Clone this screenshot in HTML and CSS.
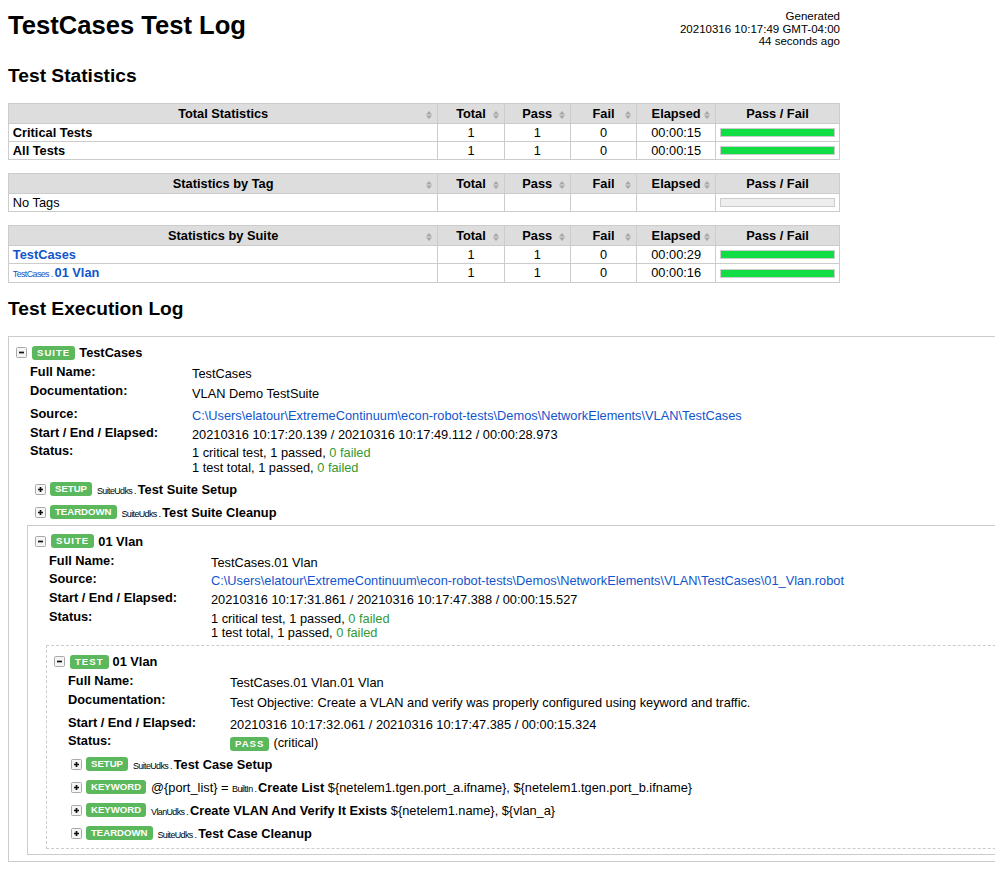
FILE: index.html
```html
<!DOCTYPE html>
<html>
<head>
<meta charset="utf-8">
<title>TestCases Test Log</title>
<link rel="stylesheet" href="styles.css">
</head>
<body>
<div class="header">
  <h1 class="title">TestCases Test Log</h1>
  <div class="generated">Generated<br>20210316 10:17:49 GMT-04:00<br>44 seconds ago</div>
</div>

<h2>Test Statistics</h2>

<table class="statistics">
  <thead>
    <tr>
      <th class="col-name">Total Statistics<svg class="sort" viewBox="0 0 6 8"><path d="M0 3.4L3 0L6 3.4Z M0 4.6L3 8L6 4.6Z"/></svg></th>
      <th class="col-stat">Total<svg class="sort" viewBox="0 0 6 8"><path d="M0 3.4L3 0L6 3.4Z M0 4.6L3 8L6 4.6Z"/></svg></th>
      <th class="col-stat">Pass<svg class="sort" viewBox="0 0 6 8"><path d="M0 3.4L3 0L6 3.4Z M0 4.6L3 8L6 4.6Z"/></svg></th>
      <th class="col-stat">Fail<svg class="sort" viewBox="0 0 6 8"><path d="M0 3.4L3 0L6 3.4Z M0 4.6L3 8L6 4.6Z"/></svg></th>
      <th class="col-elapsed">Elapsed<svg class="sort" viewBox="0 0 6 8"><path d="M0 3.4L3 0L6 3.4Z M0 4.6L3 8L6 4.6Z"/></svg></th>
      <th class="col-graph">Pass / Fail</th>
    </tr>
  </thead>
  <tbody>
    <tr>
      <td class="stat-name"><b>Critical Tests</b></td>
      <td class="c">1</td><td class="c">1</td><td class="c">0</td><td class="c">00:00:15</td>
      <td><div class="graph"><div class="pass-bar"></div></div></td>
    </tr>
    <tr>
      <td class="stat-name"><b>All Tests</b></td>
      <td class="c">1</td><td class="c">1</td><td class="c">0</td><td class="c">00:00:15</td>
      <td><div class="graph"><div class="pass-bar"></div></div></td>
    </tr>
  </tbody>
</table>

<table class="statistics">
  <thead>
    <tr>
      <th class="col-name">Statistics by Tag<svg class="sort" viewBox="0 0 6 8"><path d="M0 3.4L3 0L6 3.4Z M0 4.6L3 8L6 4.6Z"/></svg></th>
      <th class="col-stat">Total<svg class="sort" viewBox="0 0 6 8"><path d="M0 3.4L3 0L6 3.4Z M0 4.6L3 8L6 4.6Z"/></svg></th>
      <th class="col-stat">Pass<svg class="sort" viewBox="0 0 6 8"><path d="M0 3.4L3 0L6 3.4Z M0 4.6L3 8L6 4.6Z"/></svg></th>
      <th class="col-stat">Fail<svg class="sort" viewBox="0 0 6 8"><path d="M0 3.4L3 0L6 3.4Z M0 4.6L3 8L6 4.6Z"/></svg></th>
      <th class="col-elapsed">Elapsed<svg class="sort" viewBox="0 0 6 8"><path d="M0 3.4L3 0L6 3.4Z M0 4.6L3 8L6 4.6Z"/></svg></th>
      <th class="col-graph">Pass / Fail</th>
    </tr>
  </thead>
  <tbody>
    <tr>
      <td class="stat-name">No Tags</td>
      <td></td><td></td><td></td><td></td>
      <td><div class="graph empty"></div></td>
    </tr>
  </tbody>
</table>

<table class="statistics">
  <thead>
    <tr>
      <th class="col-name">Statistics by Suite<svg class="sort" viewBox="0 0 6 8"><path d="M0 3.4L3 0L6 3.4Z M0 4.6L3 8L6 4.6Z"/></svg></th>
      <th class="col-stat">Total<svg class="sort" viewBox="0 0 6 8"><path d="M0 3.4L3 0L6 3.4Z M0 4.6L3 8L6 4.6Z"/></svg></th>
      <th class="col-stat">Pass<svg class="sort" viewBox="0 0 6 8"><path d="M0 3.4L3 0L6 3.4Z M0 4.6L3 8L6 4.6Z"/></svg></th>
      <th class="col-stat">Fail<svg class="sort" viewBox="0 0 6 8"><path d="M0 3.4L3 0L6 3.4Z M0 4.6L3 8L6 4.6Z"/></svg></th>
      <th class="col-elapsed">Elapsed<svg class="sort" viewBox="0 0 6 8"><path d="M0 3.4L3 0L6 3.4Z M0 4.6L3 8L6 4.6Z"/></svg></th>
      <th class="col-graph">Pass / Fail</th>
    </tr>
  </thead>
  <tbody>
    <tr>
      <td class="stat-name"><a href="#s1" class="stat-link">TestCases</a></td>
      <td class="c">1</td><td class="c">1</td><td class="c">0</td><td class="c">00:00:29</td>
      <td><div class="graph"><div class="pass-bar"></div></div></td>
    </tr>
    <tr>
      <td class="stat-name"><a href="#s1-s1" class="stat-link"><span class="parent-name">TestCases . </span>01 Vlan</a></td>
      <td class="c">1</td><td class="c">1</td><td class="c">0</td><td class="c">00:00:16</td>
      <td><div class="graph"><div class="pass-bar"></div></div></td>
    </tr>
  </tbody>
</table>

<h2 class="log-title">Test Execution Log</h2>

<div class="log">
  <div class="suite" id="s1">
    <div class="el-header">
      <svg class="toggle" viewBox="0 0 11 11"><rect x="0.5" y="0.5" width="10" height="10" rx="1" fill="#f5f5f5" stroke="#a9a9a9"/><path d="M3 5.5H8" stroke="#111" stroke-width="1.7"/></svg>
      <span class="label spaced">SUITE</span>
      <span class="el-name">TestCases</span>
    </div>
    <table class="metadata">
      <tr><th>Full Name:</th><td>TestCases</td></tr>
      <tr class="doc"><th>Documentation:</th><td>VLAN Demo TestSuite</td></tr>
      <tr><th>Source:</th><td><a href="#">C:\Users\elatour\ExtremeContinuum\econ-robot-tests\Demos\NetworkElements\VLAN\TestCases</a></td></tr>
      <tr><th>Start / End / Elapsed:</th><td>20210316 10:17:20.139 / 20210316 10:17:49.112 / 00:00:28.973</td></tr>
      <tr><th>Status:</th><td>1 critical test, 1 passed, <span class="pass">0 failed</span><br>1 test total, 1 passed, <span class="pass">0 failed</span></td></tr>
    </table>
    <div class="children suite-children">
      <div class="keyword">
        <div class="kw-header">
          <svg class="toggle" viewBox="0 0 11 11"><rect x="0.5" y="0.5" width="10" height="10" rx="1" fill="#f5f5f5" stroke="#a9a9a9"/><path d="M3 5.5H8M5.5 3V8" stroke="#111" stroke-width="1.7"/></svg>
          <span class="label">SETUP</span>
          <span class="kw-text"><span class="parent-name">SuiteUdks . </span><b>Test Suite Setup</b></span>
        </div>
      </div>
      <div class="keyword">
        <div class="kw-header">
          <svg class="toggle" viewBox="0 0 11 11"><rect x="0.5" y="0.5" width="10" height="10" rx="1" fill="#f5f5f5" stroke="#a9a9a9"/><path d="M3 5.5H8M5.5 3V8" stroke="#111" stroke-width="1.7"/></svg>
          <span class="label">TEARDOWN</span>
          <span class="kw-text"><span class="parent-name">SuiteUdks . </span><b>Test Suite Cleanup</b></span>
        </div>
      </div>

      <div class="suite nested" id="s1-s1">
        <div class="el-header">
          <svg class="toggle" viewBox="0 0 11 11"><rect x="0.5" y="0.5" width="10" height="10" rx="1" fill="#f5f5f5" stroke="#a9a9a9"/><path d="M3 5.5H8" stroke="#111" stroke-width="1.7"/></svg>
          <span class="label spaced">SUITE</span>
          <span class="el-name">01 Vlan</span>
        </div>
        <table class="metadata">
          <tr><th>Full Name:</th><td>TestCases.01 Vlan</td></tr>
          <tr><th>Source:</th><td><a href="#">C:\Users\elatour\ExtremeContinuum\econ-robot-tests\Demos\NetworkElements\VLAN\TestCases\01_Vlan.robot</a></td></tr>
          <tr><th>Start / End / Elapsed:</th><td>20210316 10:17:31.861 / 20210316 10:17:47.388 / 00:00:15.527</td></tr>
          <tr><th>Status:</th><td>1 critical test, 1 passed, <span class="pass">0 failed</span><br>1 test total, 1 passed, <span class="pass">0 failed</span></td></tr>
        </table>
        <div class="children inner-children">
          <div class="test nested">
            <div class="el-header">
              <svg class="toggle" viewBox="0 0 11 11"><rect x="0.5" y="0.5" width="10" height="10" rx="1" fill="#f5f5f5" stroke="#a9a9a9"/><path d="M3 5.5H8" stroke="#111" stroke-width="1.7"/></svg>
              <span class="label spaced">TEST</span>
              <span class="el-name">01 Vlan</span>
            </div>
            <table class="metadata">
              <tr><th>Full Name:</th><td>TestCases.01 Vlan.01 Vlan</td></tr>
              <tr class="doc"><th>Documentation:</th><td>Test Objective: Create a VLAN and verify was properly configured using keyword and traffic.</td></tr>
              <tr><th>Start / End / Elapsed:</th><td>20210316 10:17:32.061 / 20210316 10:17:47.385 / 00:00:15.324</td></tr>
              <tr><th>Status:</th><td><div class="status-line"><span class="label spaced">PASS</span><span>(critical)</span></div></td></tr>
            </table>
            <div class="children test-children">
              <div class="keyword">
                <div class="kw-header">
                  <svg class="toggle" viewBox="0 0 11 11"><rect x="0.5" y="0.5" width="10" height="10" rx="1" fill="#f5f5f5" stroke="#a9a9a9"/><path d="M3 5.5H8M5.5 3V8" stroke="#111" stroke-width="1.7"/></svg>
                  <span class="label">SETUP</span>
                  <span class="kw-text"><span class="parent-name">SuiteUdks . </span><b>Test Case Setup</b></span>
                </div>
              </div>
              <div class="keyword">
                <div class="kw-header">
                  <svg class="toggle" viewBox="0 0 11 11"><rect x="0.5" y="0.5" width="10" height="10" rx="1" fill="#f5f5f5" stroke="#a9a9a9"/><path d="M3 5.5H8M5.5 3V8" stroke="#111" stroke-width="1.7"/></svg>
                  <span class="label">KEYWORD</span>
                  <span class="kw-text">@{port_list} = <span class="parent-name">BuiltIn . </span><b>Create List</b> ${netelem1.tgen.port_a.ifname}, ${netelem1.tgen.port_b.ifname}</span>
                </div>
              </div>
              <div class="keyword">
                <div class="kw-header">
                  <svg class="toggle" viewBox="0 0 11 11"><rect x="0.5" y="0.5" width="10" height="10" rx="1" fill="#f5f5f5" stroke="#a9a9a9"/><path d="M3 5.5H8M5.5 3V8" stroke="#111" stroke-width="1.7"/></svg>
                  <span class="label">KEYWORD</span>
                  <span class="kw-text"><span class="parent-name">VlanUdks . </span><b>Create VLAN And Verify It Exists</b> ${netelem1.name}, ${vlan_a}</span>
                </div>
              </div>
              <div class="keyword">
                <div class="kw-header">
                  <svg class="toggle" viewBox="0 0 11 11"><rect x="0.5" y="0.5" width="10" height="10" rx="1" fill="#f5f5f5" stroke="#a9a9a9"/><path d="M3 5.5H8M5.5 3V8" stroke="#111" stroke-width="1.7"/></svg>
                  <span class="label">TEARDOWN</span>
                  <span class="kw-text"><span class="parent-name">SuiteUdks . </span><b>Test Case Cleanup</b></span>
                </div>
              </div>
            </div>
          </div>
        </div>
      </div>
    </div>
  </div>
</div>
</body>
</html>
```

FILE: styles.css
```css
html {
  overflow: hidden;
}

body {
  margin: 0;
  padding: 5px 8px 0;
  font-family: "Liberation Sans", Arial, Helvetica, sans-serif;
  font-size: 12.8px;
  color: #000;
  background: #fff;
}

a {
  color: #15c;
  text-decoration: none;
}

/* Header */
.header {
  width: 832px;
  height: 38.4px;
  margin: 6px 0;
  display: flex;
  justify-content: space-between;
  align-items: flex-start;
}

.title {
  margin: 0;
  font-size: 25.6px;
  line-height: 29px;
  font-weight: bold;
}

.generated {
  margin-top: -1px;
  font-size: 11.52px;
  line-height: 12.5px;
  text-align: right;
  white-space: nowrap;
}

h2 {
  font-size: 19.2px;
  line-height: 22px;
  font-weight: bold;
  margin: 16px 0;
}

h2.log-title {
  margin: 15px 0 16px;
}

/* Statistics */
.statistics {
  width: 832px;
  table-layout: fixed;
  border-collapse: collapse;
  margin-bottom: 13px;
  font-size: 12.8px;
  line-height: 14px;
}

.statistics th,
.statistics td {
  border: 1px solid #ccc;
  padding: 1.5px 3.84px;
  vertical-align: middle;
}

.statistics th {
  position: relative;
  background: #ddd;
  padding: 2.5px 3.84px;
  font-weight: bold;
  text-align: center;
}

.col-stat {
  width: 57.6px;
}

.col-elapsed {
  width: 70.4px;
}

.col-graph {
  width: 115.2px;
}

.statistics td.c {
  text-align: center;
}

.stat-name {
  text-align: left;
}

.stat-link {
  font-weight: bold;
}

.sort {
  position: absolute;
  right: 5px;
  top: 6.5px;
  width: 6px;
  height: 8px;
  fill: #a8a8a8;
}

.graph {
  border: 1px solid #ccc;
  height: 7px;
  background: #f2f2f2;
}

.graph.empty {
  background: #eee;
}

.pass-bar {
  height: 100%;
  background: #11dd44;
}

.parent-name {
  font-size: 8.96px;
  letter-spacing: -0.63px;
  font-weight: normal;
}

.pass {
  color: #393;
}

/* Execution log */
.log {
  width: 1100px;
}

.suite {
  border: 1px solid #ccc;
}

.test {
  border: 1px dashed #ccc;
}

.nested {
  margin-top: 1px;
}

.test.nested {
  margin-top: 2px;
}

.el-header {
  display: flex;
  align-items: center;
  padding: 8px 0 3px 7px;
  white-space: nowrap;
}

.kw-header {
  display: flex;
  align-items: center;
  height: 23px;
  padding-left: 8px;
  white-space: nowrap;
}

.toggle {
  flex: none;
  width: 11px;
  height: 11px;
  margin-right: 5px;
}

.kw-header .toggle {
  margin-right: 4px;
}

.label {
  flex: none;
  display: inline-block;
  padding: 2px 5px;
  font-size: 9.6px;
  line-height: 10px;
  font-weight: bold;
  color: #fff;
  background: #5cb85c;
  border-radius: 3px;
}

.label.spaced {
  letter-spacing: 1px;
}

.el-name {
  font-weight: bold;
  margin-left: 4px;
}

.kw-text {
  margin-left: 5px;
}

.metadata {
  border-spacing: 0 2px;
  margin-left: 20px;
  font-size: 12.8px;
  line-height: 14.7px;
}

.metadata th {
  width: 160px;
  padding: 0 1px;
  text-align: left;
  vertical-align: top;
  white-space: nowrap;
  font-weight: bold;
}

.metadata td {
  padding: 2px 1px 0;
  vertical-align: top;
}

.metadata tr.doc td {
  padding: 3px 1px 3px;
}

.status-line {
  display: flex;
  align-items: center;
  gap: 4px;
}

.children {
  margin-left: 18px;
}

.suite-children {
  padding-bottom: 6px;
}

.inner-children {
  padding-bottom: 5px;
}

.test-children {
  margin-left: 16px;
  padding-bottom: 3px;
}
```
